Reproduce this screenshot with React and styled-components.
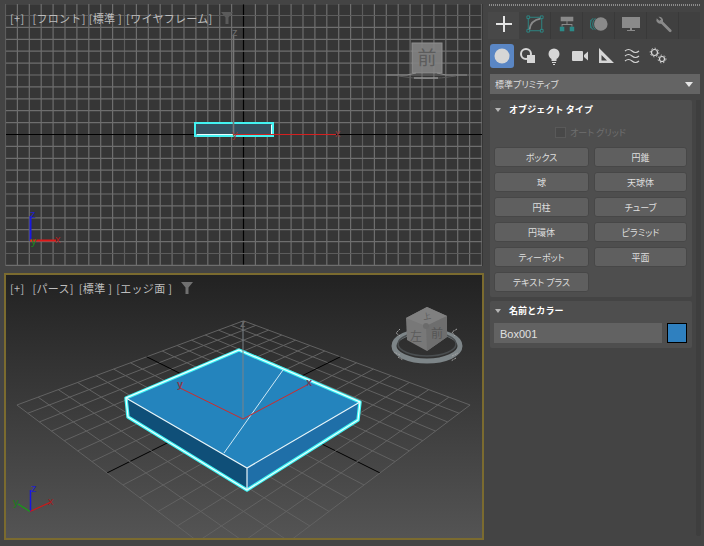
import React from 'react';
import styled, { createGlobalStyle } from 'styled-components';

const GlobalStyle = createGlobalStyle`
  html, body {
    margin: 0;
    padding: 0;
    background: #444444;
  }
  body {
    font-family: "Noto Sans CJK JP", "Liberation Sans", sans-serif;
  }
`;

const Screen = styled.div`
  width: 704px;
  height: 546px;
  overflow: hidden;
  display: grid;
  grid-template-columns: 488px 216px;
  background: #444444;
`;

/* viewports */

const ViewportColumn = styled.div`
  display: flex;
  flex-direction: column;
  gap: 7px;
  padding: 4px 0 6px 4px;
  width: 480px;
`;

const Viewport = styled.div`
  position: relative;
  overflow: hidden;
  flex: ${({ $active }) => ($active ? '0 0 267px' : '0 0 262px')};
  margin: ${({ $active }) => ($active ? '0' : '0 1px')};
  box-sizing: border-box;
  border: ${({ $active }) => ($active ? '2px solid #7b6b2f' : 'none')};
  background: ${({ $active }) =>
    $active ? 'linear-gradient(#222222, #545454)' : '#363636'};

  svg {
    display: block;
  }
`;

const ViewLabels = styled.div`
  position: absolute;
  top: ${({ $active }) => ($active ? '5px' : '6px')};
  left: ${({ $active }) => ($active ? '4px' : '5px')};
  display: flex;
  align-items: center;
  height: 16px;
  font-size: 11px;
  line-height: 16px;
  letter-spacing: 0.3px;
  color: #bdbdbd;
  white-space: nowrap;
`;

const ViewLabel = styled.span`
  margin-right: ${({ $gap }) => $gap}px;
`;

const Funnel = styled.svg`
  margin-left: ${({ $gap }) => $gap}px;
`;

const FunnelIcon = ({ gap, fill }) => (
  <Funnel $gap={gap} width="12" height="12" viewBox="0 0 12 12">
    <path d="M0 0h12L7.500 5.500V12h-3V5.500z" fill={fill} />
  </Funnel>
);

const range = (from, to) => Array.from({ length: to - from + 1 }, (_, i) => from + i);

const gridColor = (k) => (k === 0 ? '#000000' : k % 10 === 0 ? '#5c5c5c' : '#6e6e6e');

const FrontView = () => {
  const xs = range(-20, 20).map((k) => ({ k, p: 243.5 + 11.9 * k }));
  const ys = range(-11, 11).map((k) => ({ k, p: 134.5 + 11.9 * k }));
  return (
    <svg width="477" height="262" viewBox="5 4 477 262">
      <g strokeWidth="1.200">
        {xs.map(({ k, p }) => (
          <line key={k} x1={p} x2={p} y1="4" y2="266" stroke={gridColor(k)} />
        ))}
        {ys.map(({ k, p }) => (
          <line key={k} x1="6" x2="482" y1={p} y2={p} stroke={gridColor(k)} />
        ))}
      </g>
      <rect x="195" y="123" width="78" height="13" fill="#36505f" stroke="#43f2f2" strokeWidth="2" />
      <path d="M196.500 134.500H271.500V124.500" fill="none" stroke="#e8ffff" />
      <line x1="233.500" x2="233.500" y1="36" y2="134" stroke="#767676" strokeWidth="1.600" />
      <line x1="233" x2="336" y1="134.500" y2="134.500" stroke="#d42020" strokeWidth="1.200" />
      <line x1="30.500" x2="30.500" y1="216" y2="241" stroke="#1818e0" strokeWidth="2" />
      <line x1="30" x2="56" y1="240.500" y2="240.500" stroke="#e01818" strokeWidth="2" />
      <AxisLabel x="232" y="36" fill="#6f6f6f">z</AxisLabel>
      <AxisLabel x="232" y="138" fill="#8e3a3a">y</AxisLabel>
      <AxisLabel x="335" y="137" fill="#8e3a3a">x</AxisLabel>
      <AxisLabel x="30" y="218" fill="#2020c8">z</AxisLabel>
      <AxisLabel x="31" y="245" fill="#1a8a1a">y</AxisLabel>
      <AxisLabel x="55" y="243" fill="#b01c1c">x</AxisLabel>
      <rect x="412" y="43" width="30" height="30" fill="#848484" opacity="0.9" />
      <rect x="412" y="43" width="30" height="30" fill="none" stroke="#8d8d8d" />
      <CubeText x="427" y="65" fontSize="19" fill="#5c5c5c">前</CubeText>
      <path d="M386 75H407L416 73M467 75H446L437 73" fill="none" stroke="#8e8e8e" strokeWidth="1" />
      <path d="M398 76Q427 81 456 76" fill="none" stroke="#5c5c5c" strokeWidth="1" />
      <path d="M414 78H438" stroke="#a4a4a4" strokeWidth="1.200" />
    </svg>
  );
};

const AxisLabel = styled.text`
  font-family: "Liberation Sans", sans-serif;
  font-size: 11px;
`;

const CubeText = styled.text`
  font-family: "Noto Sans CJK JP", sans-serif;
  text-anchor: middle;
`;

/* floor grid of the perspective view: u, v run over -1..1 */
const project = (u, v) => {
  const s = u + v;
  const w = 1 - 0.17 * s;
  return [243.5 + (113.3 * (u - v)) / w, 405 + (56.4 * s) / w];
};

const floorLine = (a, b) => {
  const [x1, y1] = project(a[0], a[1]);
  const [x2, y2] = project(b[0], b[1]);
  return { x1, y1, x2, y2 };
};

const PerspectiveView = () => (
  <svg width="475" height="263" viewBox="6 275 475 263">
    <g stroke="#626262" strokeWidth="1">
      {range(-7, 7).map((k) => (
        <g key={k}>
          <line {...floorLine([k / 7, -1], [k / 7, 1])} stroke={k === 0 ? '#000' : undefined} />
          <line {...floorLine([-1, k / 7], [1, k / 7])} stroke={k === 0 ? '#000' : undefined} />
        </g>
      ))}
    </g>
    <polygon points="126,398 247,468 247,490 128,417" fill="#0f4f78" />
    <polygon points="247,468 359,402 357,420 247,490" fill="#1f6fa8" />
    <polygon points="239,350 360,402 247,468 126,398" fill="#2484bd" />
    <path
      d="M239 350L360 402L358 420L247 490L128 417L126 398Z"
      fill="none"
      stroke="#3ff5f5"
      strokeWidth="3.400"
      strokeLinejoin="round"
    />
    <path
      d="M239 350L360 402L358 420L247 490L128 417L126 398Z"
      fill="none"
      stroke="#f2ffff"
      strokeWidth="1.200"
    />
    <path d="M126 398L247 468L360 402M247 468V490" fill="none" stroke="#e8f6fa" strokeWidth="1.200" />
    <line x1="283" y1="370" x2="224" y2="453" stroke="#cfe8f4" strokeWidth="1" />
    <line x1="243" y1="322" x2="243" y2="418" stroke="#7a8288" strokeWidth="1" />
    <path d="M180 388L243 419L307 385" fill="none" stroke="#d02a2a" strokeWidth="1" />
    <AxisLabel x="240" y="327" fill="#6f6f6f">z</AxisLabel>
    <AxisLabel x="177" y="388" fill="#8c3a4a" fontWeight="700">y</AxisLabel>
    <AxisLabel x="306" y="386" fill="#70405a" fontWeight="700">x</AxisLabel>
    <line x1="30.500" y1="490" x2="30.500" y2="512" stroke="#1616e0" strokeWidth="1.500" />
    <line x1="30" y1="511.500" x2="51" y2="502" stroke="#d01818" strokeWidth="1.200" />
    <line x1="30" y1="511.500" x2="18" y2="504" stroke="#14a014" strokeWidth="1.200" />
    <AxisLabel x="31" y="492" fill="#2020c8">z</AxisLabel>
    <AxisLabel x="48" y="505" fill="#9c2020">x</AxisLabel>
    <AxisLabel x="13" y="506" fill="#168016">y</AxisLabel>
    <ellipse cx="427" cy="346" rx="33" ry="15" fill="none" stroke="#7d8588" strokeWidth="5" />
    <ellipse cx="427" cy="344" rx="29" ry="12" fill="none" stroke="#4a4e50" strokeWidth="1.500" />
    <g stroke="#a6a6a6" strokeWidth="1" strokeDasharray="2 1" fill="none">
      <path d="M400 329l-4 4l4 3M457 329l-5 3l3 4M400 355l-6-3M398 357l5 3M452 356l6-3M456 358l-5 3" />
    </g>
    <polygon points="427,307 447,316 447,337 427,351 407,340 406,318" fill="#787878" />
    <polygon points="427,307 447,316 426,326 406,318" fill="#808080" />
    <polygon points="426,326 447,316 447,337 427,351" fill="#6e6e6e" />
    <circle cx="426" cy="326" r="3" fill="#6b6b6b" />
    <CubeText x="427" y="319" fontSize="8" fill="#5c5c5c" transform="rotate(-10 427 316)">上</CubeText>
    <CubeText x="416" y="341" fontSize="12" fill="#5c5c5c">左</CubeText>
    <CubeText x="437" y="338" fontSize="12" fill="#565656">前</CubeText>
  </svg>
);

/* command panel */

const Panel = styled.div`
  display: flex;
  flex-direction: column;
`;

const GripLine = styled.div`
  height: 2px;
  margin: 4px 4px 6px 1px;
  background: repeating-linear-gradient(90deg, #8c8c8c 0 1px, transparent 1px 2px);
`;

const TabBar = styled.div`
  display: flex;
  height: 27px;
  background: #404040;
  margin-right: 4px;
`;

const Tab = styled.div`
  display: flex;
  align-items: center;
  justify-content: center;
  box-sizing: border-box;
  padding-bottom: 3px;
  width: ${({ $active }) => ($active ? '31px' : '32px')};
  background: ${({ $active }) => ($active ? '#484848' : 'transparent')};
  border-right: ${({ $active }) => ($active ? 'none' : '1px solid #393939')};
`;

const CategoryBar = styled.div`
  display: flex;
  gap: 2px;
  margin: 5px 0 6px 2px;
`;

const CategoryButton = styled.div`
  width: 24px;
  height: 24px;
  display: flex;
  align-items: center;
  justify-content: center;
  border-radius: 3px;
  background: ${({ $active }) => ($active ? '#5a86c4' : 'transparent')};
`;

const Dropdown = styled.div`
  height: 20px;
  width: 210px;
  margin-left: 2px;
  padding: 0 7px 0 5px;
  box-sizing: border-box;
  display: flex;
  align-items: center;
  justify-content: space-between;
  background: #646464;
  color: #dddddd;
  font-size: 9px;
  font-feature-settings: "palt";
`;

const Caret = styled.span`
  width: 0;
  height: 0;
  border-style: solid;
  border-width: ${({ $small }) => ($small ? '4px 3.500px 0' : '5px 4px 0')};
  border-color: ${({ $color }) => $color} transparent transparent;
`;

const RolloutArea = styled.div`
  display: flex;
  margin: 6px 0 0 2px;
  gap: 4px;
`;

const RolloutColumn = styled.div`
  width: 202px;
  display: flex;
  flex-direction: column;
  gap: 4px;
`;

const ScrollTrack = styled.div`
  width: 5px;
  height: 436px;
  background: #3e3e3e;
  border-radius: 0 0 2px 2px;
`;

const Rollout = styled.section`
  background: #4e4e4e;
  border-radius: 2px;
  padding: 0 5px 5px 4px;
`;

const RolloutHeader = styled.header`
  height: 19px;
  display: flex;
  align-items: center;
  gap: 8px;
  padding-left: 1px;
  font-size: 9px;
  font-weight: 700;
  color: #ffffff;
  letter-spacing: 0.1px;
`;

const Grip = styled.span`
  margin-left: auto;
  margin-right: 1px;
  width: 5px;
  height: 5px;
  background-image: radial-gradient(#8a8a8a 0.6px, transparent 0.7px);
  background-size: 2px 2px;
`;

const CheckRow = styled.div`
  height: 28px;
  padding-bottom: 1px;
  box-sizing: border-box;
  display: flex;
  align-items: center;
  justify-content: center;
  gap: 4px;
  font-size: 9px;
  color: #6e6e6e;
  font-feature-settings: "palt";
`;

const CheckBox = styled.span`
  width: 11px;
  height: 11px;
  box-sizing: border-box;
  background: #484848;
  border: 1px solid #595959;
`;

const ButtonGrid = styled.div`
  display: grid;
  grid-template-columns: 95px 93px;
  grid-auto-rows: 20px;
  gap: 5px;
`;

const ToolButton = styled.div`
  display: flex;
  align-items: center;
  justify-content: center;
  background: #5f5f5f;
  border: 1px solid #474747;
  border-radius: 3px;
  box-sizing: border-box;
  color: #dedede;
  font-size: 9px;
  font-feature-settings: "palt";
`;

const NameRow = styled.div`
  display: flex;
  gap: 5px;
  padding-top: 3px;
`;

const NameField = styled.div`
  width: 168px;
  height: 20px;
  box-sizing: border-box;
  padding: 1px 0 0 6px;
  display: flex;
  align-items: center;
  background: #626262;
  color: #e0e0e0;
  font-family: "Liberation Sans", sans-serif;
  font-size: 11px;
`;

const ColorSwatch = styled.div`
  width: 20px;
  height: 20px;
  box-sizing: border-box;
  background: #2f80bf;
  border: 1px solid #000000;
`;

const Icon = ({ children, size = 20 }) => (
  <svg width={size} height={size} viewBox="0 0 20 20">
    {children}
  </svg>
);

const TEAL = '#2b8a88';
const GRAY = '#8a8a8a';
const LIGHT = '#d6d6d6';

const tabs = [
  <Icon key="create"><path d="M10 2v16M2 10h16" stroke="#e4e4e4" strokeWidth="2" /></Icon>,
  <Icon key="modify" size={18}>
    <rect x="2.500" y="2.500" width="15" height="15" fill="none" stroke={TEAL} />
    <path d="M1 1h3v3H1zM16 1h3v3h-3zM1 16h3v3H1zM16 16h3v3h-3z" fill="#404040" stroke={TEAL} />
    <path d="M4 16Q5 6 16 4" fill="none" stroke={GRAY} strokeWidth="2" />
  </Icon>,
  <Icon key="hierarchy" size={18}>
    <path d="M3 2h14v5H3zM9.500 7h1v3h-1zM4 10h12v3h-1v-2H5v2H4z" fill={GRAY} />
    <path d="M2 13h5v5H2zM13 13h5v5h-5z" fill={TEAL} />
  </Icon>,
  <Icon key="motion" size={18}>
    <circle cx="12" cy="10" r="7.500" fill={GRAY} />
    <path d="M6 3.500A8.500 8.500 0 0 0 6 16.500M3.500 3.500A8.500 8.500 0 0 0 3.500 16.500M1.500 5A8 8 0 0 0 1.500 15" fill="none" stroke={TEAL} />
  </Icon>,
  <Icon key="display">
    <path d="M1 3h18v11H1zM9 14h2v2H9zM6 16h8v1H6z" fill={GRAY} />
  </Icon>,
  <Icon key="utilities" size={18}>
    <path d="M18 17.500L8 7.500" stroke={GRAY} strokeWidth="3" strokeLinecap="round" />
    <path d="M8.500 9.500A4.500 4.500 0 0 1 3 3.500L6 6.500L8 5L5 2A4.500 4.500 0 0 1 10 7.500Z" fill={GRAY} />
  </Icon>,
];

const categories = [
  <Icon key="geometry"><circle cx="10" cy="10" r="7.500" fill={LIGHT} /></Icon>,
  <Icon key="shapes">
    <circle cx="8" cy="8" r="5" fill="none" stroke={LIGHT} strokeWidth="2" />
    <rect x="9" y="9" width="8" height="8" fill={LIGHT} />
  </Icon>,
  <Icon key="lights">
    <circle cx="10" cy="8" r="5.500" fill={LIGHT} />
    <path d="M7.500 13h5v2h-5zM8 16h4v1H8zM9 18h2v1H9z" fill={LIGHT} />
  </Icon>,
  <Icon key="cameras">
    <rect x="2" y="5" width="11" height="10" rx="1" fill={LIGHT} />
    <path d="M14 9L18 5.500V14.500L14 11z" fill={LIGHT} />
  </Icon>,
  <Icon key="helpers">
    <path fillRule="evenodd" d="M3 2L18 17H3zM5.500 9V14.500H11z" fill={LIGHT} />
  </Icon>,
  <Icon key="warps">
    <path d="M3 5Q6.500 2 10 5T17 5M3 10Q6.500 7 10 10T17 10M3 15Q6.500 12 10 15T17 15" fill="none" stroke={LIGHT} strokeWidth="1.100" />
  </Icon>,
  <Icon key="systems">
    <circle cx="6.500" cy="6.500" r="3" fill="none" stroke={LIGHT} strokeWidth="1.200" />
    <circle cx="6.500" cy="6.500" r="4.300" fill="none" stroke={LIGHT} strokeWidth="0.900" strokeDasharray="1.500 1.800" />
    <circle cx="14" cy="13" r="2.500" fill="none" stroke={LIGHT} strokeWidth="1.200" />
    <circle cx="14" cy="13" r="3.900" fill="none" stroke={LIGHT} strokeWidth="0.900" strokeDasharray="1.500 1.800" />
  </Icon>,
];

const primitives = [
  'ボックス', '円錐', '球', '天球体', '円柱', 'チューブ',
  '円環体', 'ピラミッド', 'ティーポット', '平面', 'テキスト プラス',
];

const App = () => (
  <Screen>
    <GlobalStyle />
    <ViewportColumn>
      <Viewport>
        <FrontView />
        <ViewLabels>
          <ViewLabel $gap={8}>[+]</ViewLabel>
          <ViewLabel $gap={3}>[フロント]</ViewLabel>
          <ViewLabel $gap={4}>[標準 ]</ViewLabel>
          <ViewLabel $gap={0}>[ワイヤフレーム]</ViewLabel>
          <FunnelIcon gap={8} fill="#5a5a5a" />
        </ViewLabels>
      </Viewport>
      <Viewport $active>
        <PerspectiveView />
        <ViewLabels $active>
          <ViewLabel $gap={8}>[+]</ViewLabel>
          <ViewLabel $gap={5}>[パース]</ViewLabel>
          <ViewLabel $gap={4}>[標準 ]</ViewLabel>
          <ViewLabel $gap={0}>[エッジ面 ]</ViewLabel>
          <FunnelIcon gap={9} fill="#707070" />
        </ViewLabels>
      </Viewport>
    </ViewportColumn>

    <Panel>
      <GripLine />
      <TabBar>
        {tabs.map((icon, i) => (
          <Tab key={i} $active={i === 0}>{icon}</Tab>
        ))}
      </TabBar>
      <CategoryBar>
        {categories.map((icon, i) => (
          <CategoryButton key={i} $active={i === 0}>{icon}</CategoryButton>
        ))}
      </CategoryBar>
      <Dropdown>
        標準プリミティブ
        <Caret $color="#e6e6e6" />
      </Dropdown>
      <RolloutArea>
        <RolloutColumn>
          <Rollout>
            <RolloutHeader>
              <Caret $small $color="#b5b5b5" />
              オブジェクト タイプ
              <Grip />
            </RolloutHeader>
            <CheckRow>
              <CheckBox />
              オート グリッド
            </CheckRow>
            <ButtonGrid>
              {primitives.map((name) => (
                <ToolButton key={name}>{name}</ToolButton>
              ))}
            </ButtonGrid>
          </Rollout>
          <Rollout>
            <RolloutHeader>
              <Caret $small $color="#b5b5b5" />
              名前とカラー
              <Grip />
            </RolloutHeader>
            <NameRow>
              <NameField>Box001</NameField>
              <ColorSwatch />
            </NameRow>
          </Rollout>
        </RolloutColumn>
        <ScrollTrack />
      </RolloutArea>
    </Panel>
  </Screen>
);

export default App;
